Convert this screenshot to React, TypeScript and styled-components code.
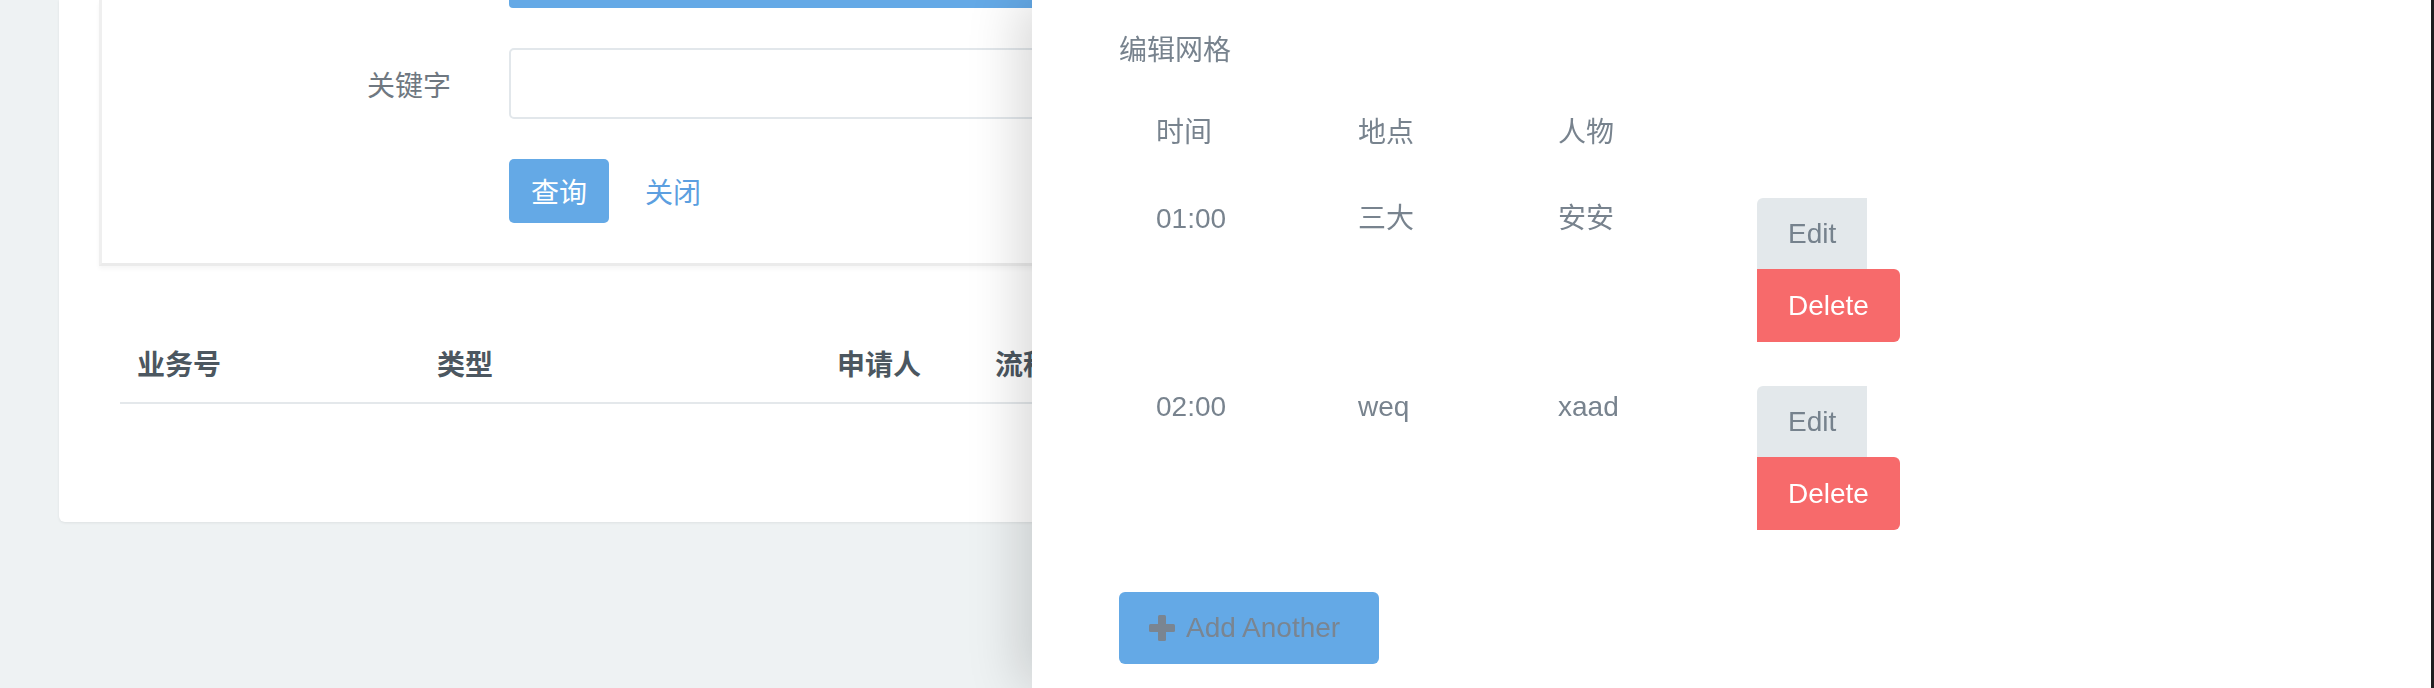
import React from "react";
import styled, { createGlobalStyle } from "styled-components";

const FONT = `"Liberation Sans", "Noto Sans CJK SC", sans-serif`;

const Global = createGlobalStyle`
  html, body {
    margin: 0;
    padding: 0;
    height: 100%;
    overflow: hidden;
    background: #eef2f3;
    font-family: ${FONT};
  }
  * { box-sizing: border-box; }
`;

const Page = styled.div`
  padding: 0 60px 0 59px;
  min-height: 688px;
`;

const Card = styled.div`
  background: #ffffff;
  border-radius: 0 0 6px 6px;
  box-shadow: 0 1px 3px rgba(0, 0, 0, 0.07);
  padding: 0 40px 118px;
`;

const SearchPanel = styled.div`
  border-left: 3px solid #efefef;
  border-bottom: 3px solid #ebebeb;
  box-shadow: 0 3px 4px rgba(0, 0, 0, 0.04);
  padding-bottom: 40px;
  display: grid;
  grid-template-columns: 407px 1fr;
  row-gap: 40px;
  align-items: center;
`;

const Label = styled.label`
  padding-right: 58px;
  text-align: right;
  font-size: 28px;
  color: #6f7881;
`;

const TopBar = styled.div`
  grid-column: 2;
  height: 8px;
  background: #64a9e6;
  border-radius: 0 0 4px 4px;
`;

const Input = styled.input`
  height: 71px;
  border: 2px solid #e2e7eb;
  border-radius: 5px;
  background: #fff;
  outline: none;
  font-family: ${FONT};
  font-size: 28px;
  padding: 0 20px;
`;

const Actions = styled.div`
  grid-column: 2;
  display: flex;
  align-items: center;
  gap: 36px;
`;

const PrimaryButton = styled.button`
  height: 64px;
  padding: 0 22px;
  border: none;
  border-radius: 5px;
  background: #64a9e6;
  color: #ffffff;
  font-family: ${FONT};
  font-size: 28px;
`;

const LinkButton = styled.a`
  font-size: 28px;
  color: #5c9fe0;
`;

const TableWrap = styled.div`
  margin: 56px 21px 0;
`;

const HeadRow = styled.div`
  display: grid;
  grid-template-columns: 300px 400px 158px 1fr;
  border-bottom: 2px solid #e4e8eb;
`;

const HeadCell = styled.div`
  padding: 23px 0 15px 17px;
  font-size: 28px;
  line-height: 42px;
  font-weight: 700;
  color: #4c5760;
  white-space: nowrap;
`;

const Drawer = styled.aside`
  position: fixed;
  top: 0;
  right: 0;
  bottom: 0;
  width: 1402px;
  background: #ffffff;
  border-right: 3px solid #1e1e1e;
  box-shadow: -12px 0 50px rgba(0, 0, 0, 0.16);
  padding: 30px 0 0 87px;
`;

const Title = styled.h2`
  margin: 0;
  font-size: 28px;
  line-height: 42px;
  font-weight: 400;
  color: #78838e;
`;

const Grid = styled.div`
  margin-top: 18px;
  display: grid;
  grid-template-columns: 239px 200px 199px 1fr;
`;

const Cell = styled.div`
  padding: 22px 0;
  font-size: 28px;
  line-height: 42px;
  color: #78838e;
  &:nth-child(4n + 1) {
    padding-left: 37px;
  }
`;

const ActionCell = styled.div`
  padding: 22px 0;
  display: flex;
  flex-direction: column;
  align-items: flex-start;
`;

const EditButton = styled.button`
  height: 71px;
  padding: 0 31px;
  border: none;
  border-radius: 6px 0 0 0;
  background: #e3e8eb;
  color: #76828d;
  font-family: ${FONT};
  font-size: 28px;
`;

const DeleteButton = styled.button`
  height: 73px;
  padding: 0 31px;
  border: none;
  border-radius: 0 6px 6px 0;
  background: #f76a6b;
  color: #ffffff;
  font-family: ${FONT};
  font-size: 28px;
`;

const AddButton = styled.button`
  margin-top: 40px;
  height: 72px;
  width: 260px;
  padding: 0 31px 0 30px;
  border: none;
  border-radius: 6px;
  background: #64a9e6;
  color: #7a8591;
  font-family: ${FONT};
  font-size: 28px;
  display: flex;
  align-items: center;
  gap: 11px;
`;

const PlusIcon = () => (
  <svg width="26" height="26" viewBox="0 0 26 26" aria-hidden="true">
    <rect x="9" y="0" width="8" height="26" rx="1.5" fill="#7a8591" />
    <rect x="0" y="9" width="26" height="8" rx="1.5" fill="#7a8591" />
  </svg>
);

const rows = [
  { time: "01:00", place: "三大", person: "安安" },
  { time: "02:00", place: "weq", person: "xaad" },
];

export default function App() {
  return (
    <>
      <Global />
      <Page>
        <Card>
          <SearchPanel>
            <TopBar />
            <Label>关键字</Label>
            <Input />
            <Actions>
              <PrimaryButton>查询</PrimaryButton>
              <LinkButton>关闭</LinkButton>
            </Actions>
          </SearchPanel>
          <TableWrap>
            <HeadRow>
              <HeadCell>业务号</HeadCell>
              <HeadCell>类型</HeadCell>
              <HeadCell>申请人</HeadCell>
              <HeadCell>流程状态</HeadCell>
            </HeadRow>
          </TableWrap>
        </Card>
      </Page>
      <Drawer>
        <Title>编辑网格</Title>
        <Grid>
          <Cell>时间</Cell>
          <Cell>地点</Cell>
          <Cell>人物</Cell>
          <Cell />
          {rows.map((r) => (
            <React.Fragment key={r.time}>
              <Cell>{r.time}</Cell>
              <Cell>{r.place}</Cell>
              <Cell>{r.person}</Cell>
              <ActionCell>
                <EditButton>Edit</EditButton>
                <DeleteButton>Delete</DeleteButton>
              </ActionCell>
            </React.Fragment>
          ))}
        </Grid>
        <AddButton>
          <PlusIcon />
          Add Another
        </AddButton>
      </Drawer>
    </>
  );
}
